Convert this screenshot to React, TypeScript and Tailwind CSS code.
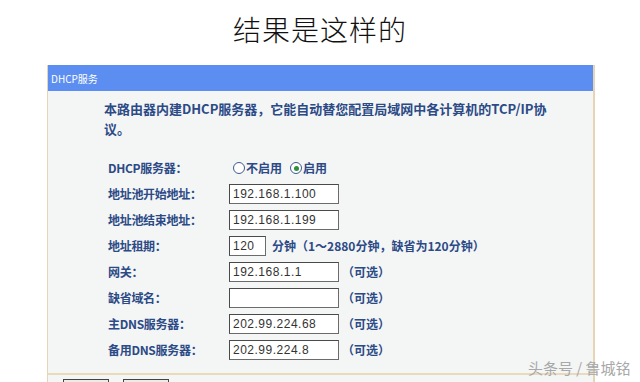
import React from 'react';

const cjk = { fontFamily: '"Noto Sans CJK SC", "Noto Sans", sans-serif' };

const Field: React.FC<{ value?: string; width?: string }> = ({ value = '', width = 'w-[110px]' }) => (
  <div
    className={`${width} h-[20px] bg-white border border-[#6b6b6b] border-t-[#4a4a4a] border-l-[#4a4a4a] flex items-center px-[3px] text-[12px] text-[#333] tracking-[0.5px]`}
    style={{ fontFamily: '"Liberation Sans", sans-serif' }}
  >
    {value}
  </div>
);

const Optional = () => <span className="ml-[3px] text-[12px] font-bold text-[#2b4a86]">（可选）</span>;

const Radio: React.FC<{ checked?: boolean }> = ({ checked }) => (
  <span className="w-[12px] h-[12px] rounded-full border border-[#3d5b8c] bg-white flex items-center justify-center mr-[1px]">
    {checked && <span className="w-[5px] h-[5px] rounded-full bg-[#2f8f3a]" />}
  </span>
);

const Row: React.FC<{ label: string; children?: React.ReactNode }> = ({ label, children }) => (
  <div className="h-[26px] flex items-center">
    <div className="w-[181px] pl-[60px] text-[12px] font-bold text-[#2b4a86] tracking-[-0.3px]">{label}</div>
    <div className="flex items-center">{children}</div>
  </div>
);

export default function App() {
  return (
    <div className="w-[640px] h-[382px] bg-white overflow-hidden relative" style={cjk}>
      <div className="h-[65px] flex items-center justify-center pb-[8px]">
        <h1 className="text-[28px] text-[#111] font-light tracking-[1px]">结果是这样的</h1>
      </div>

      <div className="ml-[47px] w-[548px] bg-[#f4f5f5] border-l border-r-2 border-[#e6d5b5]">
        <div className="h-[26px] bg-[#5b8ef0] flex items-center px-[3px] text-[10px] text-white">DHCP服务</div>

        <div className="pl-[56px] pt-[8px] text-[13px] leading-[20px] font-bold text-[#2b4a86]">
          <p>本路由器内建DHCP服务器，它能自动替您配置局域网中各计算机的TCP/IP协</p>
          <p>议。</p>
        </div>

        <div className="pt-[16px] pb-[10px] border-b-2 border-[#ead9bb]">
          <Row label="DHCP服务器：">
            <div className="flex items-center pl-[4px] text-[12px] font-bold text-[#2b4a86]">
              <Radio />
              <span className="mr-[8px]">不启用</span>
              <Radio checked />
              <span>启用</span>
            </div>
          </Row>
          <Row label="地址池开始地址：">
            <Field value="192.168.1.100" />
          </Row>
          <Row label="地址池结束地址：">
            <Field value="192.168.1.199" />
          </Row>
          <Row label="地址租期：">
            <Field value="120" width="w-[37px]" />
            <span className="ml-[6px] text-[12px] font-bold text-[#2b4a86]">分钟（1～2880分钟，缺省为120分钟）</span>
          </Row>
          <Row label="网关：">
            <Field value="192.168.1.1" />
            <Optional />
          </Row>
          <Row label="缺省域名：">
            <Field />
            <Optional />
          </Row>
          <Row label="主DNS服务器：">
            <Field value="202.99.224.68" />
            <Optional />
          </Row>
          <Row label="备用DNS服务器：">
            <Field value="202.99.224.8" />
            <Optional />
          </Row>
        </div>

        <div className="flex gap-[14px] pl-[15px] pt-[4px] h-[30px]">
          <div className="w-[46px] h-[22px] border border-[#444] bg-[#ecebe6]" />
          <div className="w-[46px] h-[22px] border border-[#444] bg-[#ecebe6]" />
        </div>
      </div>

      <div className="absolute left-[528px] top-[359px] whitespace-nowrap text-[15px] leading-[18px] text-[#a8a8a8]">
        头条号 / 鲁城铭
      </div>
    </div>
  );
}
